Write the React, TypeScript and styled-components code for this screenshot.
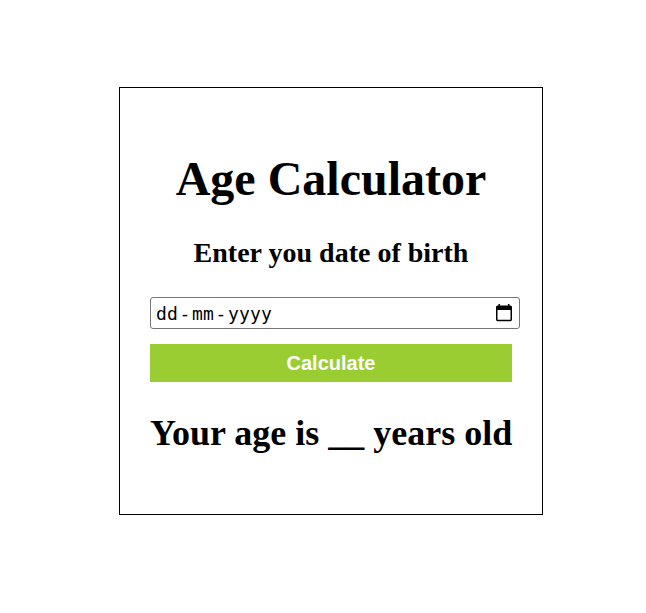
import React from "react";
import styled, { createGlobalStyle } from "styled-components";

const GlobalStyle = createGlobalStyle`
  body {
    margin: 0;
    background: #fff;
    color: #000;
    font-family: "Liberation Serif", "Times New Roman", serif;
  }
`;

const Page = styled.main`
  display: flex;
  justify-content: center;
  box-sizing: border-box;
  height: 613px;
  padding: 87px 0 0 16px;
`;

const Card = styled.section`
  box-sizing: border-box;
  width: 424px;
  height: 428px;
  padding: 64px 30px 0;
  border: 1px solid #000;
  text-align: center;
  white-space: nowrap;
`;

const Title = styled.h1`
  margin: 0;
  font-size: 48px;
  line-height: 54px;
`;

const Subtitle = styled.h3`
  margin: 31px 0 0;
  font-size: 28px;
  line-height: 32px;
`;

const DateField = styled.div`
  display: flex;
  align-items: center;
  justify-content: space-between;
  box-sizing: border-box;
  width: 370px;
  height: 32px;
  margin-top: 28px;
  padding: 0 6px 0 5px;
  border: 1px solid #767676;
  border-radius: 3px;
`;

const DateParts = styled.span`
  display: flex;
  gap: 1.5px;
  padding-top: 2px;
  font: 18px/28px "DejaVu Sans Mono", monospace;
  letter-spacing: 0.16px;
`;

const CalendarIcon = styled.svg`
  display: block;
  width: 18px;
  height: 20px;
`;

const CalculateButton = styled.button`
  display: block;
  width: 100%;
  height: 38px;
  margin-top: 15px;
  padding: 0;
  border: 0;
  background: yellowgreen;
  color: #fff;
  font: bold 20px/38px "Liberation Sans", Arial, sans-serif;
`;

const Result = styled.h2`
  margin: 31px 0 0;
  font-size: 36px;
  line-height: 41px;
`;

export default function App() {
  return (
    <>
      <GlobalStyle />
      <Page>
        <Card>
          <Title>Age Calculator</Title>
          <Subtitle>Enter you date of birth</Subtitle>
          <DateField>
            <DateParts>
              <span>dd</span>
              <span>-</span>
              <span>mm</span>
              <span>-</span>
              <span>yyyy</span>
            </DateParts>
            <CalendarIcon viewBox="0 0 18 20" aria-hidden="true">
              <path
                fillRule="evenodd"
                d="M3.5 1h1.5v1.5h8V1h1.5v1.5h1Q17 2.5 17 4v12.5q0 1.7-1.5 1.7h-13Q1 18.2 1 16.5V4q0-1.5 1.5-1.5h1zM2.5 7v9.7h13V7z"
              />
            </CalendarIcon>
          </DateField>
          <CalculateButton type="button">Calculate</CalculateButton>
          <Result>Your age is __ years old</Result>
        </Card>
      </Page>
    </>
  );
}
